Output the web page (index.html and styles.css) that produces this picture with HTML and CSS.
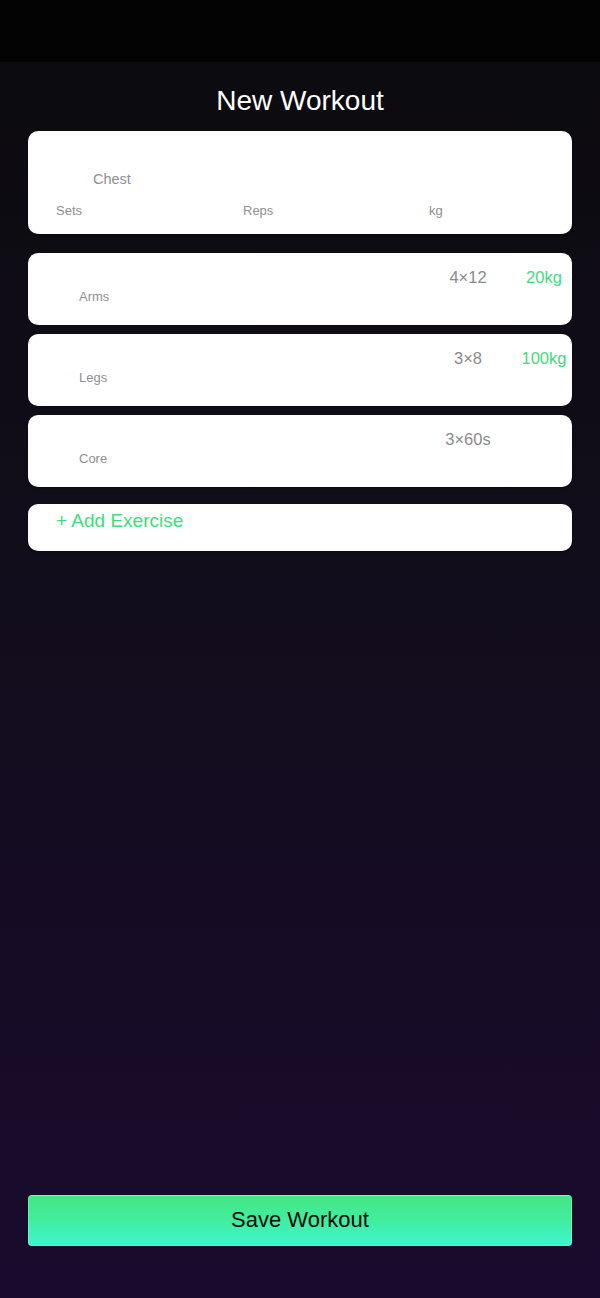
FILE: index.html
```html
<!DOCTYPE html>
<html>
<head>
<meta charset="utf-8">
<link rel="stylesheet" href="styles.css">
</head>
<body>
<div class="statusbar"></div>
<main class="screen">
  <h1 class="title">New Workout</h1>
  <section class="card card-new">
    <div class="new-name">Chest</div>
    <div class="new-fields">
      <span>Sets</span>
      <span>Reps</span>
      <span>kg</span>
    </div>
  </section>
  <div class="list">
    <section class="card exercise">
      <div class="ex-name">Arms</div>
      <div class="ex-stats">
        <span class="ex-reps">4×12</span>
        <span class="ex-kg">20kg</span>
      </div>
    </section>
    <section class="card exercise">
      <div class="ex-name">Legs</div>
      <div class="ex-stats">
        <span class="ex-reps">3×8</span>
        <span class="ex-kg">100kg</span>
      </div>
    </section>
    <section class="card exercise">
      <div class="ex-name">Core</div>
      <div class="ex-stats">
        <span class="ex-reps">3×60s</span>
        <span class="ex-kg"></span>
      </div>
    </section>
  </div>
  <section class="card add-card">+ Add Exercise</section>
  <button class="save">Save Workout</button>
</main>
</body>
</html>
```

FILE: styles.css
```css
* { box-sizing: border-box; }
html, body {
  margin: 0;
  padding: 0;
  width: 600px;
  height: 1298px;
  background: #1a0b2e;
  font-family: "Liberation Sans", Arial, sans-serif;
}
.statusbar {
  height: 62px;
  background: #030303;
}
.screen {
  height: 1236px;
  display: flex;
  flex-direction: column;
  padding: 0 28px;
  background: linear-gradient(180deg, #0c0b0f 0%, #120d1c 45%, #1a0b2e 100%);
}
.title {
  margin: 23px 0 0;
  font-size: 28px;
  line-height: 32px;
  font-weight: normal;
  color: #ffffff;
  text-align: center;
}
.card {
  background: #ffffff;
  border-radius: 10px;
  box-shadow: 0 1px 2px rgba(0, 0, 0, 0.35);
}
.card-new {
  margin-top: 14px;
  height: 103px;
  padding: 39px 0 0 28px;
}
.new-name {
  margin-left: 37px;
  font-size: 14.5px;
  line-height: 18px;
  color: #8e8e93;
}
.new-fields {
  margin-top: 15px;
  display: grid;
  grid-template-columns: 187px 186px auto;
  font-size: 13px;
  line-height: 15px;
  color: #8e8e93;
}
.list {
  margin-top: 19px;
  display: flex;
  flex-direction: column;
  gap: 9px;
}
.exercise {
  height: 72px;
  display: flex;
  align-items: flex-start;
  padding: 15px 0 0 51px;
}
.ex-name {
  margin-top: 21px;
  font-size: 13px;
  line-height: 16px;
  color: #8e8e93;
}
.ex-stats {
  margin-left: auto;
  display: flex;
  gap: 20px;
  font-size: 16.5px;
  line-height: 18px;
}
.ex-reps, .ex-kg {
  width: 56px;
  text-align: center;
  white-space: nowrap;
}
.ex-reps { color: #8a8a8e; }
.ex-kg { color: #3fdc7c; }
.add-card {
  margin-top: 17px;
  height: 47px;
  padding: 6px 0 0 28px;
  font-size: 19px;
  line-height: 22px;
  color: #3fdc7c;
}
.save {
  margin-top: auto;
  margin-bottom: 52px;
  height: 51px;
  width: 100%;
  border: 1px solid rgba(255, 255, 255, 0.25);
  border-radius: 4px;
  background: linear-gradient(180deg, #44e683 0%, #41ed9e 50%, #3bf6d2 100%);
  font-family: "Liberation Sans", Arial, sans-serif;
  font-size: 22px;
  line-height: 24px;
  color: #0a0a0a;
  padding: 0 0 2px;
  cursor: pointer;
}
```
